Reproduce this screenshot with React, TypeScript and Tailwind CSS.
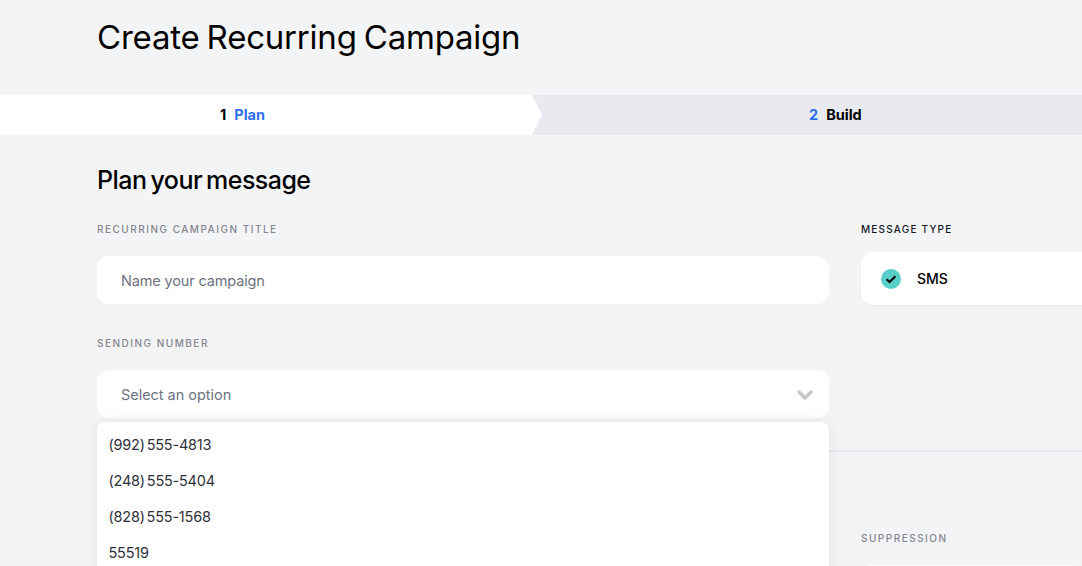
import { ChevronDown } from "lucide-react"

const numbers = ["(992) 555-4813", "(248) 555-5404", "(828) 555-1568", "55519"]

const Label = ({ children, dark }: { children: string; dark?: boolean }) => (
  <div className={`h-[14px] text-[10px] leading-[14px] font-medium uppercase ${dark ? "tracking-[1.2px] text-[#14141f]" : "tracking-[1.5px] text-[#85858f]"}`}>
    {children}
  </div>
)

export default function App() {
  return (
    <div className="w-[1082px] h-[566px] overflow-hidden bg-[#f3f4f6] text-black font-['Inter',sans-serif]">
      <header className="h-[95px] pl-[97px] pt-[15px]">
        <h1 className="text-[33px] leading-[44px] font-normal tracking-[-0.21px] [word-spacing:-2px]">Create Recurring Campaign</h1>
      </header>

      {/* Steps */}
      <div className="flex h-[40px] bg-[#e9eaf0] text-[14.5px] leading-[40px] font-bold">
        <div className="flex items-start w-[542px] pl-[220px] gap-[8px] bg-white [clip-path:polygon(0_0,532px_0,100%_50%,532px_100%,0_100%)]">
          <span>1</span>
          <span className="text-[#2f6fed]">Plan</span>
        </div>
        <div className="flex items-start pl-[267px] gap-[8px]">
          <span className="text-[#2f6fed]">2</span>
          <span>Build</span>
        </div>
      </div>

      <main className="pl-[97px]">
        <h2 className="mt-[29px] h-[32px] text-[25px] leading-[32px] font-medium tracking-[-0.55px] [word-spacing:-2px]">Plan your message</h2>

        <div className="flex gap-[32px] w-[1100px] mt-[26px]">
          {/* Left column */}
          <div className="w-[732px] shrink-0">
            <Label>Recurring campaign title</Label>
            <div className="mt-[20px] flex items-center h-[48px] pl-[24px] pt-[2px] rounded-xl bg-white text-[14.5px] text-[#6d7280] tracking-[-0.15px]">
              Name your campaign
            </div>

            <div className="mt-[32px]">
              <Label>Sending number</Label>
            </div>
            <div className="relative mt-[20px]">
              <div className="flex items-center justify-between h-[48px] pl-[24px] pr-[12px] pt-[2px] rounded-xl bg-white text-[14.5px] text-[#6d7280] tracking-[-0.03px]">
                Select an option
                <ChevronDown className="w-[24px] h-[24px] text-[#c4c4c8]" strokeWidth={3.2} />
              </div>
              <div className="absolute z-10 top-[52px] left-0 w-full h-[200px] pt-[5px] pl-[11.5px] rounded-t-lg bg-white shadow-[0_0_16px_rgba(0,0,0,0.07)]">
                {numbers.map((n) => (
                  <div key={n} className="flex items-center h-[36px] text-[14.5px] text-[#30303a] tracking-[-0.22px] [word-spacing:-2px]">
                    {n}
                  </div>
                ))}
              </div>
            </div>
          </div>

          {/* Right column */}
          <div className="flex-1">
            <Label dark>Message type</Label>
            <div className="mt-[16px] flex items-center gap-[16px] h-[53px] pl-[20px] rounded-xl bg-white shadow-[0_1px_3px_rgba(0,0,0,0.04)]">
              <span className="flex items-center justify-center w-[20px] h-[20px] rounded-full bg-[#58d0c8]">
                <svg viewBox="0 0 12 12" className="w-[12px] h-[12px]" fill="none" stroke="#0b0b14" strokeWidth="2.2">
                  <path d="M1.6 6.2 4.6 9 10.4 3.2" />
                </svg>
              </span>
              <span className="text-[14px] font-medium">SMS</span>
            </div>
          </div>
        </div>

        <div className="mt-[32px] h-[2px] bg-[#e8e9ec]" />

        <div className="ml-[764px] mt-[79px]">
          <Label>Suppression</Label>
          <div className="mt-[20px] h-[40px] rounded-xl bg-white" />
        </div>
      </main>
    </div>
  )
}
